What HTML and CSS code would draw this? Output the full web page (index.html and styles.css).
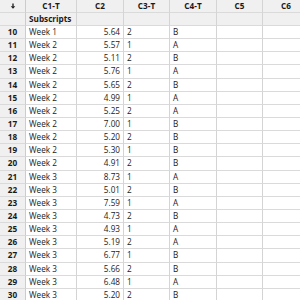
FILE: index.html
```html
<!DOCTYPE html>
<html>
<head>
<meta charset="utf-8">
<link rel="stylesheet" href="styles.css">
</head>
<body>
<div class="sheet">
  <div class="row head">
    <div class="cell rn corner"><svg class="arrow" width="6" height="6" viewBox="0 0 6 6"><path d="M3 0.5V3.5" stroke="#1a1a1a" stroke-width="1.3"/><path d="M0.8 3.2H5.2L3 5.8Z" fill="#1a1a1a"/></svg></div>
    <div class="cell hc">C1-T</div>
    <div class="cell hc">C2</div>
    <div class="cell hc">C3-T</div>
    <div class="cell hc">C4-T</div>
    <div class="cell hc">C5</div>
    <div class="cell hc">C6</div>
  </div>
  <div class="row sub">
    <div class="cell rn"></div>
    <div class="cell sc">Subscripts</div>
    <div class="cell sc"></div>
    <div class="cell sc"></div>
    <div class="cell sc"></div>
    <div class="cell sc"></div>
    <div class="cell sc"></div>
  </div>
  <div class="row"><div class="cell rn">10</div><div class="cell t">Week 1</div><div class="cell n">5.64</div><div class="cell t">2</div><div class="cell t">B</div><div class="cell"></div><div class="cell"></div></div>
  <div class="row"><div class="cell rn">11</div><div class="cell t">Week 2</div><div class="cell n">5.57</div><div class="cell t">1</div><div class="cell t">A</div><div class="cell"></div><div class="cell"></div></div>
  <div class="row"><div class="cell rn">12</div><div class="cell t">Week 2</div><div class="cell n">5.11</div><div class="cell t">2</div><div class="cell t">B</div><div class="cell"></div><div class="cell"></div></div>
  <div class="row"><div class="cell rn">13</div><div class="cell t">Week 2</div><div class="cell n">5.76</div><div class="cell t">1</div><div class="cell t">A</div><div class="cell"></div><div class="cell"></div></div>
  <div class="row"><div class="cell rn">14</div><div class="cell t">Week 2</div><div class="cell n">5.65</div><div class="cell t">2</div><div class="cell t">B</div><div class="cell"></div><div class="cell"></div></div>
  <div class="row"><div class="cell rn">15</div><div class="cell t">Week 2</div><div class="cell n">4.99</div><div class="cell t">1</div><div class="cell t">A</div><div class="cell"></div><div class="cell"></div></div>
  <div class="row"><div class="cell rn">16</div><div class="cell t">Week 2</div><div class="cell n">5.25</div><div class="cell t">2</div><div class="cell t">A</div><div class="cell"></div><div class="cell"></div></div>
  <div class="row"><div class="cell rn">17</div><div class="cell t">Week 2</div><div class="cell n">7.00</div><div class="cell t">1</div><div class="cell t">B</div><div class="cell"></div><div class="cell"></div></div>
  <div class="row"><div class="cell rn">18</div><div class="cell t">Week 2</div><div class="cell n">5.20</div><div class="cell t">2</div><div class="cell t">B</div><div class="cell"></div><div class="cell"></div></div>
  <div class="row"><div class="cell rn">19</div><div class="cell t">Week 2</div><div class="cell n">5.30</div><div class="cell t">1</div><div class="cell t">B</div><div class="cell"></div><div class="cell"></div></div>
  <div class="row"><div class="cell rn">20</div><div class="cell t">Week 2</div><div class="cell n">4.91</div><div class="cell t">2</div><div class="cell t">B</div><div class="cell"></div><div class="cell"></div></div>
  <div class="row"><div class="cell rn">21</div><div class="cell t">Week 3</div><div class="cell n">8.73</div><div class="cell t">1</div><div class="cell t">A</div><div class="cell"></div><div class="cell"></div></div>
  <div class="row"><div class="cell rn">22</div><div class="cell t">Week 3</div><div class="cell n">5.01</div><div class="cell t">2</div><div class="cell t">B</div><div class="cell"></div><div class="cell"></div></div>
  <div class="row"><div class="cell rn">23</div><div class="cell t">Week 3</div><div class="cell n">7.59</div><div class="cell t">1</div><div class="cell t">A</div><div class="cell"></div><div class="cell"></div></div>
  <div class="row"><div class="cell rn">24</div><div class="cell t">Week 3</div><div class="cell n">4.73</div><div class="cell t">2</div><div class="cell t">B</div><div class="cell"></div><div class="cell"></div></div>
  <div class="row"><div class="cell rn">25</div><div class="cell t">Week 3</div><div class="cell n">4.93</div><div class="cell t">1</div><div class="cell t">A</div><div class="cell"></div><div class="cell"></div></div>
  <div class="row"><div class="cell rn">26</div><div class="cell t">Week 3</div><div class="cell n">5.19</div><div class="cell t">2</div><div class="cell t">A</div><div class="cell"></div><div class="cell"></div></div>
  <div class="row"><div class="cell rn">27</div><div class="cell t">Week 3</div><div class="cell n">6.77</div><div class="cell t">1</div><div class="cell t">B</div><div class="cell"></div><div class="cell"></div></div>
  <div class="row"><div class="cell rn">28</div><div class="cell t">Week 3</div><div class="cell n">5.66</div><div class="cell t">2</div><div class="cell t">B</div><div class="cell"></div><div class="cell"></div></div>
  <div class="row"><div class="cell rn">29</div><div class="cell t">Week 3</div><div class="cell n">6.48</div><div class="cell t">1</div><div class="cell t">A</div><div class="cell"></div><div class="cell"></div></div>
  <div class="row"><div class="cell rn">30</div><div class="cell t">Week 3</div><div class="cell n">5.20</div><div class="cell t">2</div><div class="cell t">B</div><div class="cell"></div><div class="cell"></div></div>
</div>
</body>
</html>
```
FILE: styles.css
```css
html, body {
  margin: 0;
  padding: 0;
  background: #ffffff;
  overflow: hidden;
}
.sheet {
  width: 310px;
  font-family: "Open Sans", "Noto Sans", sans-serif;
  font-size: 8.2px;
  color: #1a1a1a;
}
.row {
  display: grid;
  grid-template-columns: 26px 51px 47px 46px 47px 46px 47px;
  height: 13.15px;
}
.row.head {
  height: 12.5px;
}
.row.sub {
  height: 13.5px;
}
.cell {
  box-sizing: border-box;
  border-right: 1.5px solid #d4d4d4;
  border-bottom: 1.5px solid #dadada;
  display: flex;
  align-items: center;
  white-space: nowrap;
  overflow: hidden;
  line-height: 1;
}
.rn {
  background: #f0f0f0;
  justify-content: center;
  font-weight: 700;
  border-right-color: #cccccc;
}
.arrow {
  display: block;
}
.hc {
  background: #f0f0f0;
  justify-content: center;
  font-weight: 700;
}
.sc {
  background: #f0f0f0;
  font-weight: 700;
  padding-left: 3px;
}
.t {
  padding-left: 3px;
}
.n {
  justify-content: flex-end;
  padding-right: 3px;
}
```
